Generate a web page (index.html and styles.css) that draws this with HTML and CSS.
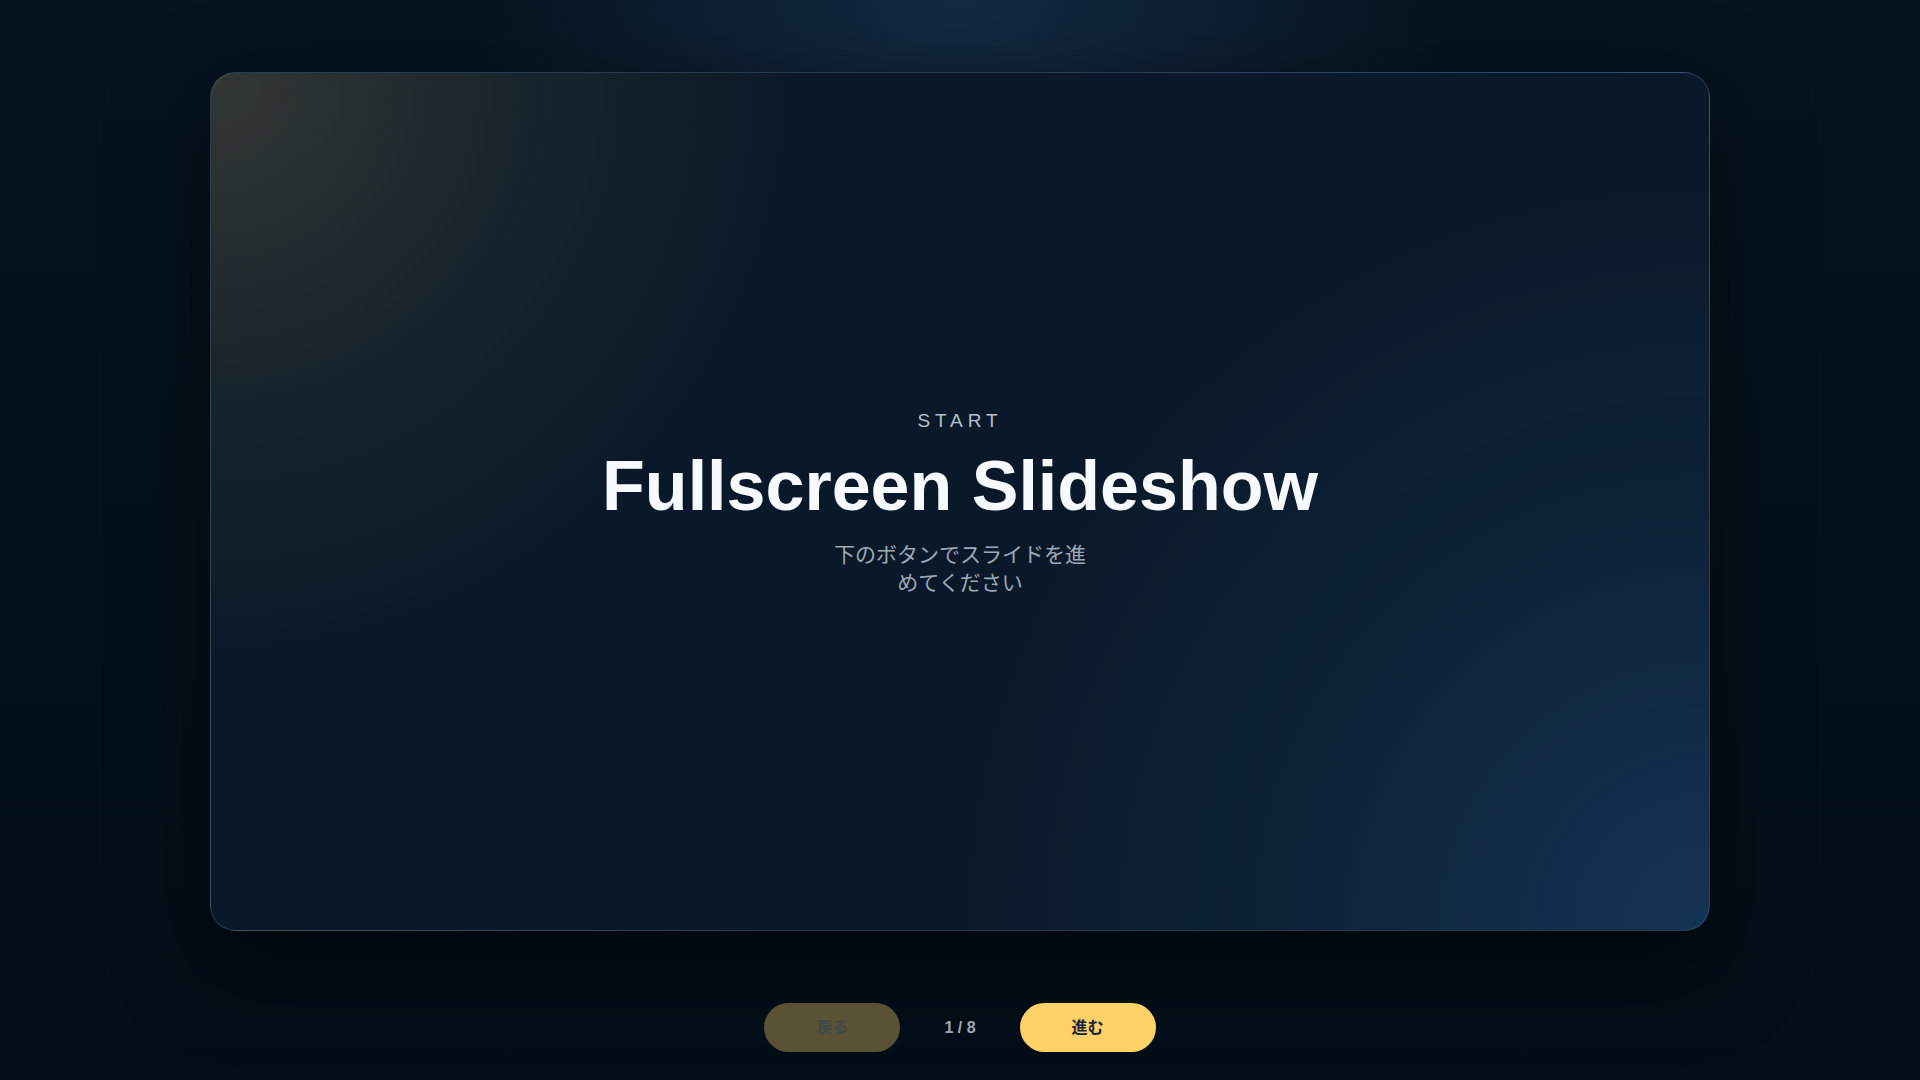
FILE: index.html
```html
<!DOCTYPE html>
<html lang="ja">
<head>
<meta charset="utf-8">
<title>Fullscreen Slideshow</title>
<link rel="stylesheet" href="styles.css">
</head>
<body>
<main class="stage">
  <section class="slide">
    <div class="slide-content">
      <p class="eyebrow">START</p>
      <h1 class="title">Fullscreen Slideshow</h1>
      <p class="subtitle">下のボタンでスライドを進めてください</p>
    </div>
  </section>
  <nav class="controls">
    <button class="btn btn-prev" disabled>戻る</button>
    <span class="counter">1 / 8</span>
    <button class="btn btn-next">進む</button>
  </nav>
</main>
</body>
</html>
```

FILE: styles.css
```css
* { box-sizing: border-box; }

html, body {
  margin: 0;
  height: 100%;
}

body {
  font-family: "Liberation Sans", "Noto Sans CJK JP", sans-serif;
  background:
    radial-gradient(ellipse 700px 420px at 50% 0%, rgba(22, 46, 74, 0.85), transparent 70%),
    linear-gradient(180deg, #061420 0%, #04101b 55%, #020d17 100%);
  color: #f5f8fc;
  overflow: hidden;
}

.stage {
  height: 100vh;
  display: flex;
  flex-direction: column;
  padding: 72px 210px 28px;
}

.slide {
  flex: 1;
  display: flex;
  align-items: center;
  justify-content: center;
  border-radius: 26px;
  border: 1px solid rgba(120, 150, 185, 0.28);
  background:
    radial-gradient(circle at 0% 0%, rgba(255, 209, 102, 0.17), rgba(255, 209, 102, 0.06) 18%, transparent 34%),
    radial-gradient(circle at 100% 100%, rgba(40, 100, 160, 0.36), rgba(40, 100, 160, 0.13) 24%, transparent 44%),
    #0a1929;
  box-shadow: 0 30px 90px rgba(0, 0, 0, 0.5);
}

.slide-content {
  display: flex;
  flex-direction: column;
  align-items: center;
  text-align: center;
}

.eyebrow {
  margin: 5px 0 0;
  font-size: 19px;
  line-height: 1.2;
  letter-spacing: 0.26em;
  color: #b7c1cd;
}

.title {
  margin: 14.5px 0 0;
  font-size: 70px;
  line-height: 1.1;
  font-weight: 700;
  color: #f6f9fd;
}

.subtitle {
  margin: 16.5px 0 0;
  max-width: 260px;
  font-size: 21px;
  line-height: 1.35;
  color: #9ea9b8;
}

.controls {
  margin-top: 72px;
  display: flex;
  align-items: center;
  justify-content: center;
  gap: 44px;
}

.btn {
  width: 136px;
  height: 49px;
  padding: 0 0 3px;
  border: none;
  border-radius: 999px;
  font-family: "Liberation Sans", "Noto Sans CJK JP", sans-serif;
  font-size: 16px;
  font-weight: 700;
  cursor: pointer;
}

.btn-prev {
  background: #5a5234;
  color: #3f4a4b;
}

.btn-next {
  background: #ffd166;
  color: #15253a;
}

.counter {
  font-size: 16px;
  font-weight: 700;
  color: #9ea9b8;
}
```
